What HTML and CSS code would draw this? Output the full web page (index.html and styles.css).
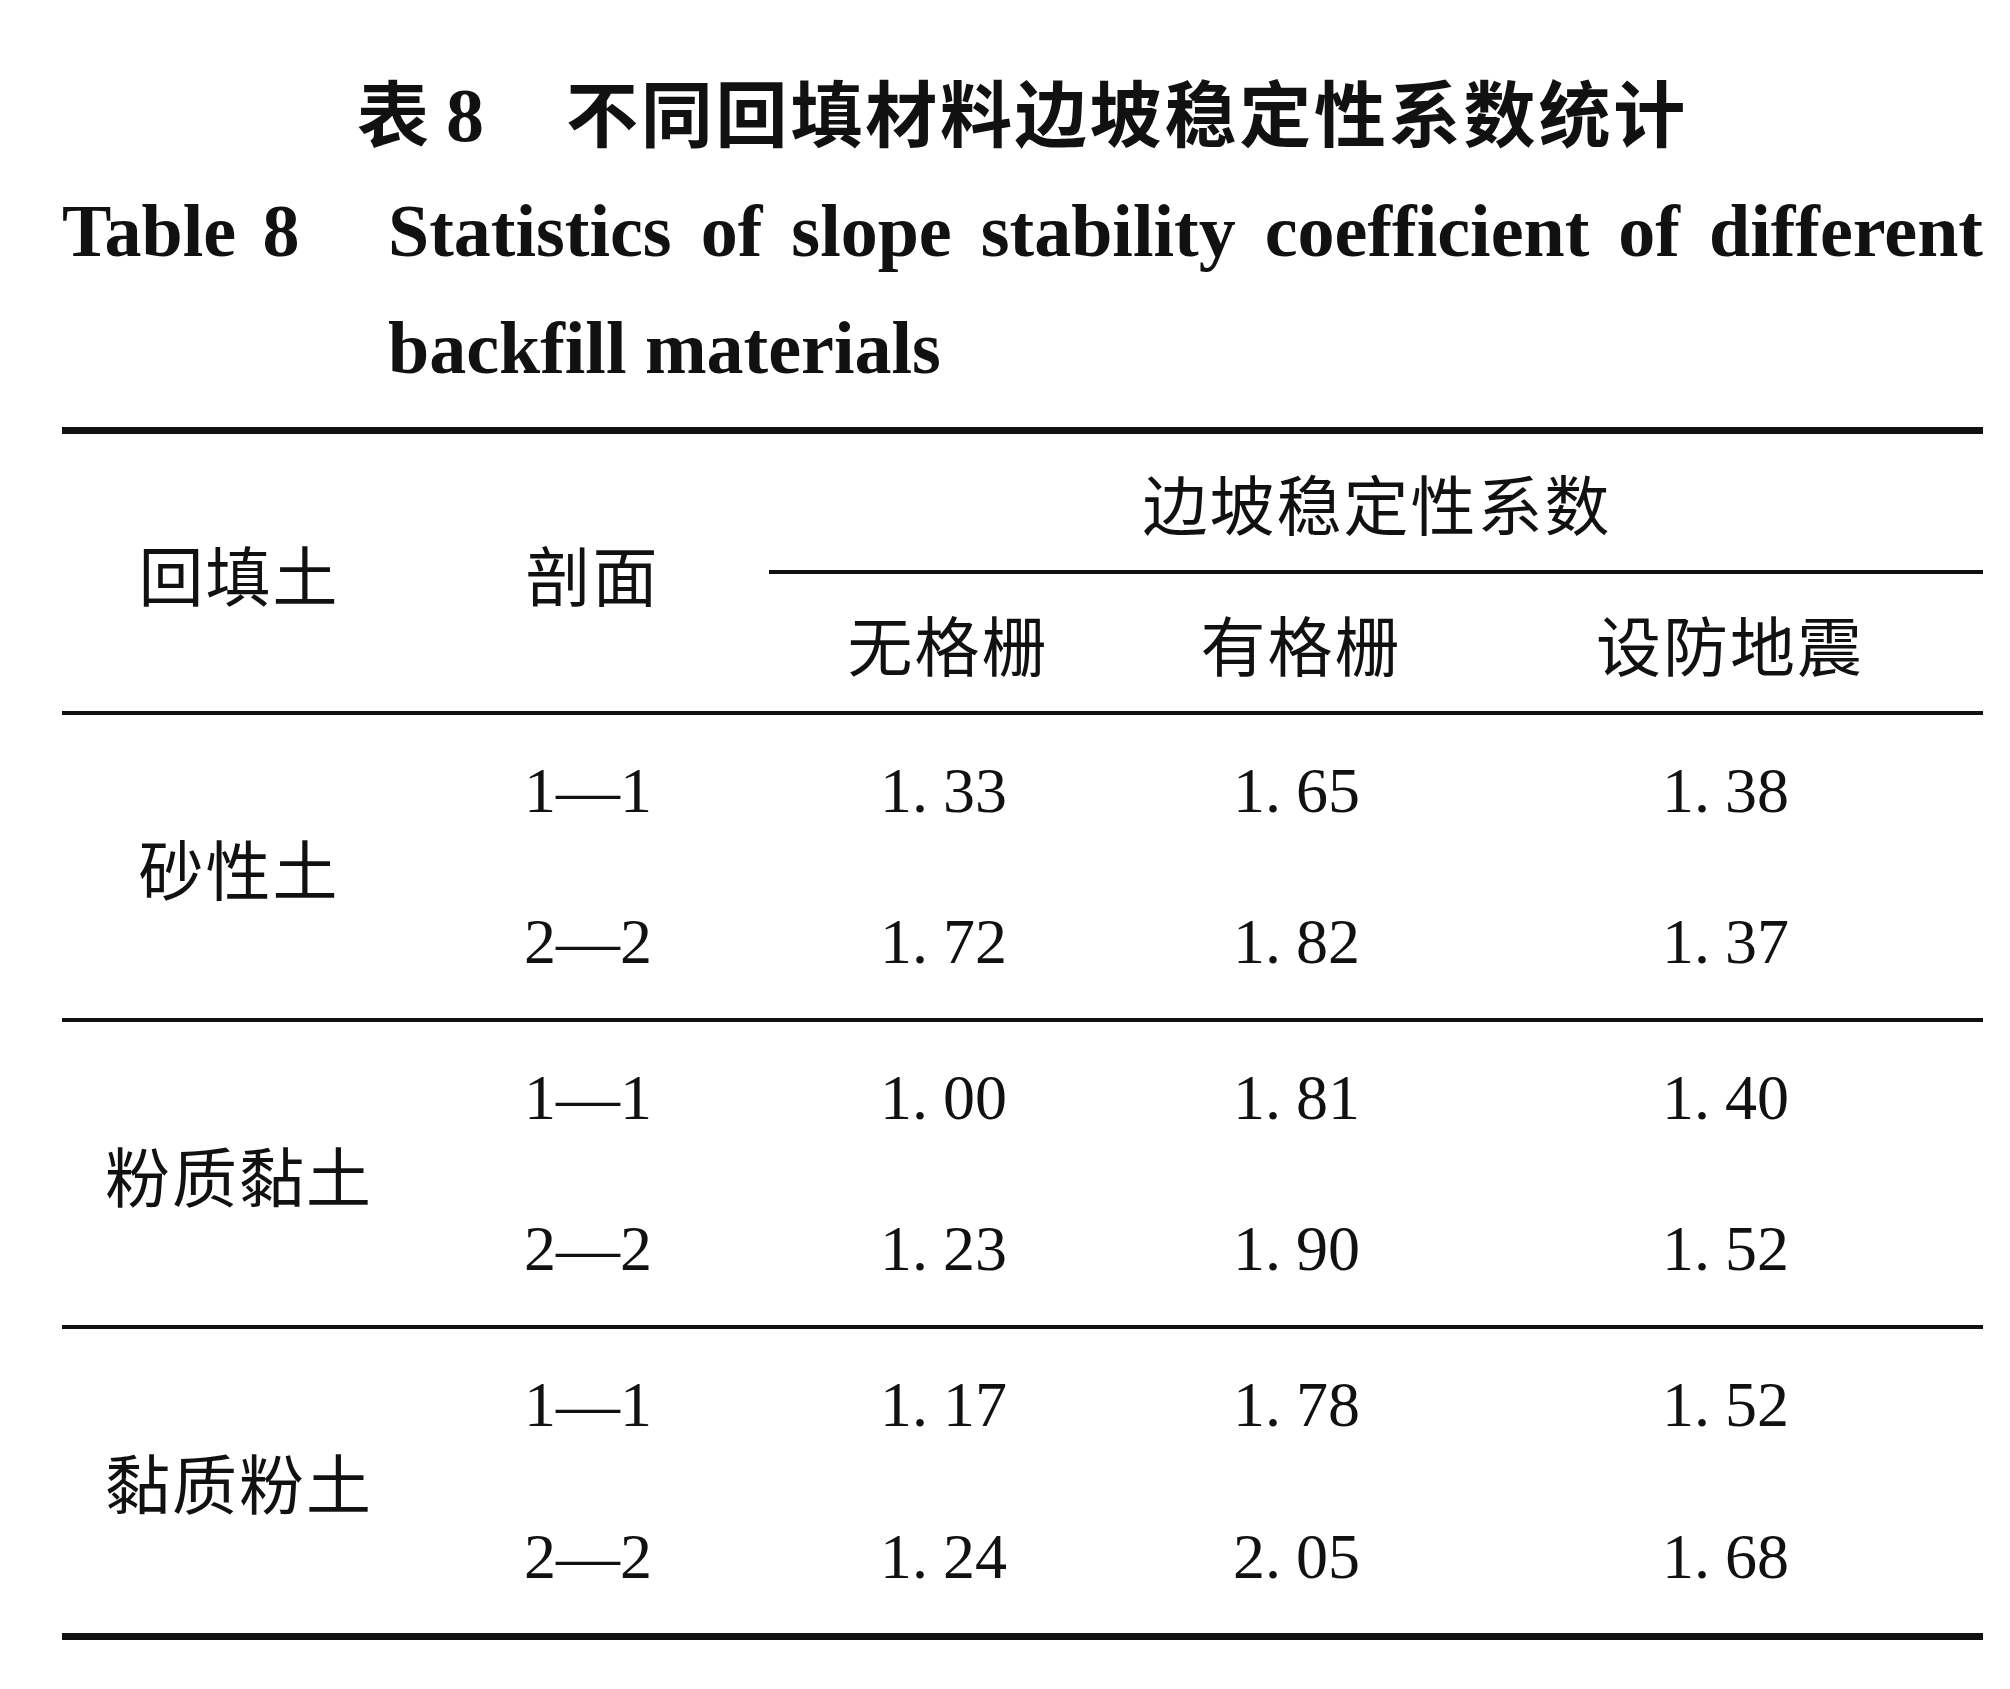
FILE: index.html
```html
<!DOCTYPE html>
<html lang="zh-CN">
<head>
<meta charset="utf-8">
<title>表 8 不同回填材料边坡稳定性系数统计</title>
<link rel="stylesheet" href="styles.css">
</head>
<body>
<main class="page">
  <h1 class="title-cn"><span class="cn-label">表</span><span class="cn-num">8</span><span class="cn-text">不同回填材料边坡稳定性系数统计</span></h1>
  <div class="title-en">
    <span class="en-label">Table 8</span>
    <p class="en-text">Statistics of slope stability coefficient of different backfill materials</p>
  </div>

  <div class="table">
    <div class="grid thead">
      <div class="cell cjk h-soil">回填土</div>
      <div class="cell cjk h-sec">剖面</div>
      <div class="cell cjk h-group">边坡稳定性系数</div>
      <div class="cell cjk h-sub">无格栅</div>
      <div class="cell cjk h-sub">有格栅</div>
      <div class="cell cjk h-sub">设防地震</div>
    </div>

    <div class="grid tgroup">
      <div class="cell cjk g-label">砂性土</div>
      <div class="cell num">1—1</div>
      <div class="cell num">1.<span class="frac">33</span></div>
      <div class="cell num">1.<span class="frac">65</span></div>
      <div class="cell num">1.<span class="frac">38</span></div>
      <div class="cell num">2—2</div>
      <div class="cell num">1.<span class="frac">72</span></div>
      <div class="cell num">1.<span class="frac">82</span></div>
      <div class="cell num">1.<span class="frac">37</span></div>
    </div>

    <div class="grid tgroup">
      <div class="cell cjk g-label">粉质黏土</div>
      <div class="cell num">1—1</div>
      <div class="cell num">1.<span class="frac">00</span></div>
      <div class="cell num">1.<span class="frac">81</span></div>
      <div class="cell num">1.<span class="frac">40</span></div>
      <div class="cell num">2—2</div>
      <div class="cell num">1.<span class="frac">23</span></div>
      <div class="cell num">1.<span class="frac">90</span></div>
      <div class="cell num">1.<span class="frac">52</span></div>
    </div>

    <div class="grid tgroup last">
      <div class="cell cjk g-label">黏质粉土</div>
      <div class="cell num">1—1</div>
      <div class="cell num">1.<span class="frac">17</span></div>
      <div class="cell num">1.<span class="frac">78</span></div>
      <div class="cell num">1.<span class="frac">52</span></div>
      <div class="cell num">2—2</div>
      <div class="cell num">1.<span class="frac">24</span></div>
      <div class="cell num">2.<span class="frac">05</span></div>
      <div class="cell num">1.<span class="frac">68</span></div>
    </div>
  </div>
</main>
</body>
</html>
```

FILE: styles.css
```css
* {
  box-sizing: border-box;
}

html, body {
  margin: 0;
  background: #ffffff;
  color: #111111;
}

body {
  font-family: "Liberation Serif", "Noto Sans CJK SC", serif;
}

.page {
  width: 1921px;
  margin-left: 62px;
  padding-top: 74px;
}

/* ---------- captions ---------- */
.title-cn {
  margin: 0;
  font-family: "Noto Sans CJK SC", sans-serif;
  font-weight: 700;
  font-size: 72px;
  line-height: 72px;
  text-align: center;
  white-space: nowrap;
}

.cn-num {
  font-family: "Liberation Serif", serif;
  font-size: 76px;
  margin: 0 82px 0 17px;
}

.cn-text {
  letter-spacing: 2.8px;
}

.title-en {
  display: flex;
  margin-top: 22px;
  font-family: "Liberation Serif", serif;
  font-weight: 700;
  font-size: 74px;
  line-height: 117px;
}

.en-label {
  flex: 0 0 326px;
  white-space: nowrap;
  word-spacing: 8px;
}

.en-text {
  flex: 1;
  margin: 0;
  text-align: justify;
}

/* ---------- table ---------- */
.table {
  margin-top: 20px;
  border-top: 7px solid #111111;
  border-bottom: 7px solid #111111;
}

.grid {
  display: grid;
  grid-template-columns: 352px 355px 356px 350px 1fr;
}

.thead {
  grid-template-rows: 140px 141px;
}

.tgroup {
  grid-template-rows: 1fr 1fr;
  height: 307px;
  border-bottom: 4px solid #111111;
}

.tgroup.last {
  height: 304px;
  border-bottom: none;
}

.cell {
  display: flex;
  align-items: center;
  justify-content: center;
  white-space: nowrap;
}

.cjk {
  font-family: "Noto Sans CJK SC", sans-serif;
  font-weight: 400;
  font-size: 65px;
  letter-spacing: 2px;
  padding-left: 2px;
}

.num {
  font-family: "Liberation Serif", serif;
  font-size: 64px;
  padding-right: 7px;
}

.frac {
  margin-left: 15px;
}

.h-soil {
  grid-row: 1 / 3;
  grid-column: 1;
  border-bottom: 4px solid #111111;
}

.h-sec {
  grid-row: 1 / 3;
  grid-column: 2;
  border-bottom: 4px solid #111111;
}

.h-group {
  grid-row: 1;
  grid-column: 3 / 6;
  border-bottom: 4px solid #111111;
}

.h-sub {
  grid-row: 2;
  border-bottom: 4px solid #111111;
}

.g-label {
  grid-row: 1 / 3;
  grid-column: 1;
}
```
